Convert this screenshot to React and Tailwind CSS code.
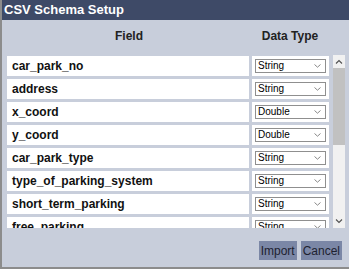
const FIELDS = [
  ['car_park_no', 'String'],
  ['address', 'String'],
  ['x_coord', 'Double'],
  ['y_coord', 'Double'],
  ['car_park_type', 'String'],
  ['type_of_parking_system', 'String'],
  ['short_term_parking', 'String'],
  ['free_parking', 'String'],
];

function Chevron({ up }) {
  return (
    <svg width="8" height="5" viewBox="0 0 8 5" className="block">
      <path d={up ? 'M1 4.5L4 1.5L7 4.5' : 'M1 0.5L4 3.5L7 0.5'} fill="none" stroke="#505050" strokeWidth="1.1" />
    </svg>
  );
}

function TypeSelect({ value }) {
  return (
    <div className="flex h-[14px] w-[71px] items-center justify-between border border-[#8f8f8f] bg-white pl-[2px] pr-[4px] text-[10px] leading-none text-black">
      <span>{value}</span>
      <svg width="7" height="4" viewBox="0 0 7 4">
        <path d="M0.5 0.5L3.5 3.2L6.5 0.5" fill="none" stroke="#7a7a7a" strokeWidth="0.9" />
      </svg>
    </div>
  );
}

export default function App() {
  return (
    <div
      className="flex h-[269px] w-[349px] flex-col border-b-2 border-l-2 border-[#8c8c8c] bg-[#c8cedb]"
      style={{ fontFamily: '"Liberation Sans", Arial, sans-serif' }}
    >
      <div className="flex h-[20px] shrink-0 items-center bg-[#3e4a67] pl-[2px] text-[13px] font-bold text-white">
        CSV Schema Setup
      </div>

      <div className="flex h-[35px] shrink-0 items-center pb-[4px] text-[12px] font-bold text-[#222]">
        <div className="w-[248px] pl-[6px] text-center">Field</div>
        <div className="w-[80px] text-center">Data Type</div>
      </div>

      <div className="flex h-[173px] shrink-0 pl-[5px]">
        <div className="flex w-[324px] flex-col gap-[3px] overflow-hidden pt-[1px]">
          {FIELDS.map(([name, type]) => (
            <div key={name} className="flex h-[20px] shrink-0 gap-[3px]">
              <div className="flex w-[242px] items-center bg-white pl-[5px] text-[12px] font-bold text-[#111]">
                {name}
              </div>
              <div className="flex w-[77px] items-center justify-center bg-white">
                <TypeSelect value={type} />
              </div>
            </div>
          ))}
        </div>
        <div className="ml-[2px] flex w-[12px] flex-col bg-[#f1f1f1]">
          <div className="flex h-[13px] items-center justify-center">
            <Chevron up />
          </div>
          <div className="h-[77px] bg-[#c1c1c1]" />
          <div className="flex-1" />
          <div className="flex h-[13px] items-center justify-center">
            <Chevron />
          </div>
        </div>
      </div>

      <div className="flex flex-1 items-start justify-end gap-[4px] pr-[7px] pt-[13px]">
        <button className="h-[19px] bg-[#7b87a6] px-[2px] text-[12px] text-[#1e2230]">Import</button>
        <button className="h-[19px] bg-[#7b87a6] px-[2px] text-[12px] text-[#1e2230]">Cancel</button>
      </div>
    </div>
  );
}
